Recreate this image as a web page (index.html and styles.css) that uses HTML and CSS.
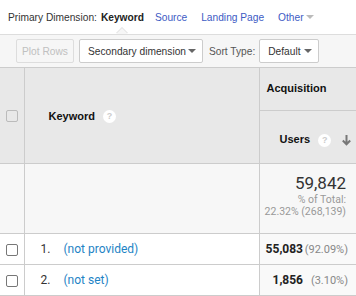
FILE: index.html
```html
<!DOCTYPE html>
<html>
	<head>
		<meta charset="utf-8" />
		<title>Keyword report</title>
		<link rel="stylesheet" href="styles.css">
	</head>
	<body>
		<div class="dimBar">
			<span class="dimLabel">Primary Dimension:</span>
			<span class="dimItem active">Keyword</span>
			<span class="dimItem">Source</span>
			<span class="dimItem">Landing Page</span>
			<span class="dimItem other">Other<i class="caret"></i></span>
		</div>
		<div class="toolbar">
			<button class="btn disabled">Plot Rows</button>
			<div class="select wide">Secondary dimension <i class="caret dark"></i></div>
			<span class="sortLabel">Sort Type:</span>
			<div class="select">Default <i class="caret dark"></i></div>
		</div>
		<table class="report">
			<colgroup>
				<col class="colCheck">
				<col class="colDim">
				<col class="colMetric">
			</colgroup>
			<thead>
				<tr>
					<th rowspan="2" class="check"><span class="box head"></span></th>
					<th rowspan="2" class="dimHead">Keyword <span class="help">?</span></th>
					<th class="groupHead">Acquisition</th>
				</tr>
				<tr>
					<th class="metricHead">
						<div class="metricInner">
							<span>Users <span class="help">?</span></span>
							<span class="sortArrow">
								<svg width="9" height="11" viewBox="0 0 9 11"><path d="M4.5 0v9M0.8 5.5l3.7 3.8 3.7-3.8" fill="none" stroke="#777" stroke-width="2"/></svg>
							</span>
						</div>
					</th>
				</tr>
			</thead>
			<tbody>
				<tr class="totals">
					<td class="check"></td>
					<td></td>
					<td class="totalCell">
						<div class="bigNum">59,842</div>
						<div class="sub">% of Total:</div>
						<div class="sub">22.32% (268,139)</div>
					</td>
				</tr>
				<tr class="row">
					<td class="check"><span class="box"></span></td>
					<td><span class="idx">1.</span><a class="link">(not provided)</a></td>
					<td class="val"><b>55,083</b><span class="pct">(92.09%)</span></td>
				</tr>
				<tr class="row">
					<td class="check"><span class="box"></span></td>
					<td><span class="idx">2.</span><a class="link">(not set)</a></td>
					<td class="val"><b>1,856</b><span class="pct">(3.10%)</span></td>
				</tr>
			</tbody>
		</table>
	</body>
</html>
```

FILE: styles.css
```css
*,
*::before,
*::after{
	box-sizing: border-box;
}
body{
	margin: 0;
	width: 356px;
	overflow: hidden;
	font-family: Roboto, "Liberation Sans", Arial, sans-serif;
	color: #333;
	background: #fff;
	white-space: nowrap;
}
.dimBar{
	height: 34px;
	display: flex;
	align-items: center;
	padding: 0 0 0 8px;
	font-family: "Liberation Sans", Arial, sans-serif;
	font-size: 10.2px;
}
.dimBar span{
	flex-shrink: 0;
}
.dimLabel{
	color: #333;
	margin-right: 4px;
}
.dimItem{
	color: #3d5bc4;
	margin-right: 14px;
}
.dimItem.active{
	color: #222;
	font-weight: bold;
	margin-right: 11px;
	position: relative;
}
.dimItem.active::before,
.dimItem.active::after{
	content: "";
	position: absolute;
	left: 50%;
	margin-left: -6px;
	border: 6px solid transparent;
	border-top: none;
}
.dimItem.active::before{
	top: 15px;
	border-bottom-color: #ddd;
}
.dimItem.active::after{
	top: 16px;
	border-bottom-color: #f6f6f6;
}
.other{
	display: flex;
	align-items: center;
}
.caret{
	display: inline-block;
	width: 0;
	height: 0;
	border-left: 4px solid transparent;
	border-right: 4px solid transparent;
	border-top: 4px solid #bbb;
	margin-left: 2px;
}
.caret.dark{
	border-top-color: #666;
	margin-left: auto;
}
.toolbar{
	height: 33px;
	background: #f6f6f6;
	border-top: 1px solid #ddd;
	display: flex;
	align-items: center;
	padding: 0 0 0 16px;
	font-family: "Liberation Sans", Arial, sans-serif;
	font-size: 10.2px;
}
.toolbar > *{
	flex-shrink: 0;
}
.btn{
	height: 24px;
	width: 58px;
	padding: 0;
	font-family: inherit;
	font-size: 10.2px;
	border: 1px solid #ddd;
	border-radius: 2px;
	background: #f6f6f6;
	color: #c0c0c0;
	margin-right: 5px;
}
.select{
	height: 24px;
	width: 60px;
	display: flex;
	align-items: center;
	padding: 0 6px 0 8px;
	background: #fff;
	border: 1px solid #ccc;
	border-radius: 2px;
	color: #333;
}
.select.wide{
	width: 124px;
}
.sortLabel{
	color: #555;
	margin: 0 4px 0 6px;
}
.report{
	width: 356px;
	border-collapse: collapse;
	table-layout: fixed;
	font-size: 12px;
}
.colCheck{
	width: 24px;
}
.colDim{
	width: 235px;
}
.colMetric{
	width: 97px;
}
.report th,
.report td{
	border: 1px solid #ccc;
	border-left: none;
	border-right: 1px solid #ccc;
	padding: 0;
}
.report th:last-child,
.report td:last-child{
	border-right: none;
}
.report thead th{
	background: #e8e8e8;
	font-family: "Liberation Sans", Arial, sans-serif;
	font-size: 11px;
	color: #111;
	text-align: left;
}
.report tr:first-child th{
	border-top: 1px solid #ccc;
}
.report thead th.check,
.check{
	text-align: center;
}
.groupHead{
	height: 43px;
	padding-left: 7px !important;
	padding-bottom: 3px !important;
}
.metricHead{
	height: 53px;
}
.metricInner{
	display: flex;
	align-items: center;
	justify-content: space-between;
	padding: 6px 5px 0 20px;
}
.dimHead{
	padding-left: 24px !important;
	padding-top: 2px !important;
}
.help{
	display: inline-block;
	width: 13px;
	height: 13px;
	border-radius: 50%;
	background: #fff;
	color: #ccc;
	font-size: 9px;
	line-height: 13px;
	text-align: center;
	font-weight: bold;
	margin-left: 5px;
	vertical-align: middle;
}
.sortArrow{
	display: flex;
}
.box{
	display: inline-block;
	width: 12px;
	height: 12px;
	border: 1px solid #777;
	border-radius: 2px;
	background: #fff;
	vertical-align: middle;
}
.box.head{
	border-color: #bbb;
	background: #e8e8e8;
}
.totals td{
	background: #f7f7f7;
	height: 70px;
}
.totalCell{
	text-align: right;
	vertical-align: top;
	padding: 8px 10px 0 0 !important;
}
.bigNum{
	font-size: 17px;
	color: #333;
	line-height: 22px;
}
.sub{
	font-size: 10.5px;
	color: #999;
	line-height: 12px;
}
.row td{
	height: 31px;
	font-size: 12px;
}
.row td.check{
	background: #fff;
}
.idx{
	display: inline-block;
	width: 39px;
	padding-left: 16px;
	color: #333;
}
.link{
	color: #1e83c5;
}
.val{
	background: #f9f9f9;
	text-align: right;
	padding-right: 8px !important;
	font-size: 12px;
}
.val b{
	color: #222;
}
.pct{
	display: inline-block;
	width: 45px;
	text-align: right;
	color: #888;
	font-size: 11px;
}
```
